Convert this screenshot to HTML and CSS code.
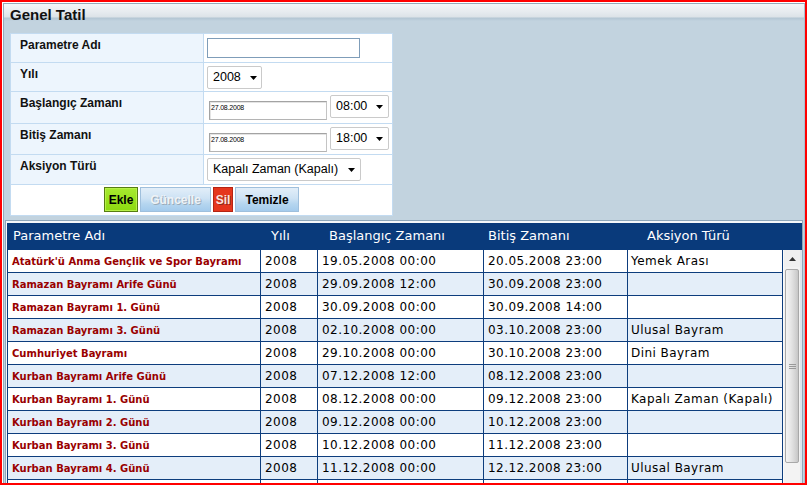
FILE: index.html
```html
<!DOCTYPE html>
<html lang="tr">
<head>
<meta charset="utf-8">
<title>Genel Tatil</title>
<link rel="stylesheet" href="styles.css">
</head>
<body>
<div class="frame">
  <div class="panel">
    <div class="titlebar">Genel Tatil</div>

    <div class="form">
      <div class="lbl r1">Parametre Adı</div>
      <div class="val r1"><span class="textbox"></span></div>

      <div class="lbl r2">Yılı</div>
      <div class="val r2"><span class="select s-year"><span>2008</span><svg class="caret" width="7" height="4" viewBox="0 0 7 4"><path d="M0 0h7L3.5 4z"/></svg></span></div>

      <div class="lbl r3">Başlangıç Zamanı</div>
      <div class="val r3 dt"><span class="date">27.08.2008</span><span class="select s-time"><span>08:00</span><svg class="caret" width="7" height="4" viewBox="0 0 7 4"><path d="M0 0h7L3.5 4z"/></svg></span></div>

      <div class="lbl r4">Bitiş Zamanı</div>
      <div class="val r4 dt"><span class="date">27.08.2008</span><span class="select s-time"><span>18:00</span><svg class="caret" width="7" height="4" viewBox="0 0 7 4"><path d="M0 0h7L3.5 4z"/></svg></span></div>

      <div class="lbl r5">Aksiyon Türü</div>
      <div class="val r5"><span class="select s-type"><span>Kapalı Zaman (Kapalı)</span><svg class="caret" width="7" height="4" viewBox="0 0 7 4"><path d="M0 0h7L3.5 4z"/></svg></span></div>

      <div class="buttons">
        <span class="btn ekle">Ekle</span>
        <span class="btn blue disabled">Güncelle</span>
        <span class="btn sil">Sil</span>
        <span class="btn blue">Temizle</span>
      </div>
    </div>

    <div class="grid">
      <div class="grid-head">
        <div class="h1">Parametre Adı</div>
        <div class="h2">Yılı</div>
        <div class="h3">Başlangıç Zamanı</div>
        <div class="h4">Bitiş Zamanı</div>
        <div class="h5">Aksiyon Türü</div>
      </div>
      <div class="grid-body">
        <div class="rows">
          <div class="row"><div class="name">Atatürk'ü Anma Gençlik ve Spor Bayramı</div><div class="cell">2008</div><div class="cell">19.05.2008 00:00</div><div class="cell">20.05.2008 23:00</div><div class="cell">Yemek Arası</div></div>
          <div class="row alt"><div class="name">Ramazan Bayramı Arife Günü</div><div class="cell">2008</div><div class="cell">29.09.2008 12:00</div><div class="cell">30.09.2008 23:00</div><div class="cell"></div></div>
          <div class="row"><div class="name">Ramazan Bayramı 1. Günü</div><div class="cell">2008</div><div class="cell">30.09.2008 00:00</div><div class="cell">30.09.2008 14:00</div><div class="cell"></div></div>
          <div class="row alt"><div class="name">Ramazan Bayramı 3. Günü</div><div class="cell">2008</div><div class="cell">02.10.2008 00:00</div><div class="cell">03.10.2008 23:00</div><div class="cell">Ulusal Bayram</div></div>
          <div class="row"><div class="name">Cumhuriyet Bayramı</div><div class="cell">2008</div><div class="cell">29.10.2008 00:00</div><div class="cell">30.10.2008 23:00</div><div class="cell">Dini Bayram</div></div>
          <div class="row alt"><div class="name">Kurban Bayramı Arife Günü</div><div class="cell">2008</div><div class="cell">07.12.2008 12:00</div><div class="cell">08.12.2008 23:00</div><div class="cell"></div></div>
          <div class="row"><div class="name">Kurban Bayramı 1. Günü</div><div class="cell">2008</div><div class="cell">08.12.2008 00:00</div><div class="cell">09.12.2008 23:00</div><div class="cell">Kapalı Zaman (Kapalı)</div></div>
          <div class="row alt"><div class="name">Kurban Bayramı 2. Günü</div><div class="cell">2008</div><div class="cell">09.12.2008 00:00</div><div class="cell">10.12.2008 23:00</div><div class="cell"></div></div>
          <div class="row"><div class="name">Kurban Bayramı 3. Günü</div><div class="cell">2008</div><div class="cell">10.12.2008 00:00</div><div class="cell">11.12.2008 23:00</div><div class="cell"></div></div>
          <div class="row alt"><div class="name">Kurban Bayramı 4. Günü</div><div class="cell">2008</div><div class="cell">11.12.2008 00:00</div><div class="cell">12.12.2008 23:00</div><div class="cell">Ulusal Bayram</div></div>
          <div class="row"><div class="name"></div><div class="cell"></div><div class="cell"></div><div class="cell"></div><div class="cell"></div></div>
        </div>
        <div class="scroll">
          <div class="sb-btn"><svg width="7" height="4" viewBox="0 0 7 4"><path d="M3.5 0L7 4H0z" fill="#333"/></svg></div>
          <div class="sb-thumb"><svg width="7" height="7" viewBox="0 0 7 7"><path d="M0 1.5h7M0 3.5h7M0 5.5h7" stroke="#9a9a9a" stroke-width="1"/></svg></div>
          <div class="sb-space"></div>
          <div class="sb-btn"><svg width="7" height="4" viewBox="0 0 7 4"><path d="M0 0h7L3.5 4z" fill="#333"/></svg></div>
        </div>
      </div>
    </div>
  </div>
</div>
</body>
</html>
```

FILE: styles.css
```css
html, body {
  margin: 0;
  padding: 0;
  background: #fff;
}

body {
  font-family: "Liberation Sans", Arial, sans-serif;
}

.frame {
  width: 807px;
  height: 485px;
  box-sizing: border-box;
  border: 2px solid #ff0000;
  padding: 1px 0 0 1px;
  background: #fff;
  overflow: hidden;
}

.panel {
  border: 1px solid #93a9ba;
  border-right-color: #a9bfcf;
  border-bottom: none;
  background: #c2d3df;
}

.titlebar {
  height: 17px;
  box-sizing: border-box;
  padding: 2px 0 0 6px;
  font: bold 15px/17px "Liberation Sans", Arial, sans-serif;
  color: #111;
  background: linear-gradient(to bottom, #f4f6f8 0px, #e6ebef 8px, #dce3e8 13px, #b3c6d3 14px, #bccedb 16px, #c2d3df 17px);
}

/* ---------- form ---------- */
.form {
  display: grid;
  grid-template-columns: 193px 188px;
  width: 383px;
  box-sizing: border-box;
  margin: 12px 0 0 6px;
  border: 1px solid #c3dbf1;
  background: #fff;
}

.lbl {
  box-sizing: border-box;
  background: #edf5fd;
  border-right: 1px solid #c3dbf1;
  border-bottom: 1px solid #c3dbf1;
  padding: 3px 0 0 9px;
  font: bold 12px/16px "Liberation Sans", Arial, sans-serif;
  color: #111;
}

.val {
  box-sizing: border-box;
  border-bottom: 1px solid #c3dbf1;
  padding: 3px 0 0 3px;
  display: flex;
  align-items: flex-start;
}

.r1 { height: 29px; }
.r2 { height: 29px; }
.r3 { height: 32px; }
.r4 { height: 31px; }
.r5 { height: 30px; }

.val.r1 { padding-top: 4px; }

.textbox {
  display: block;
  width: 153px;
  height: 20px;
  box-sizing: border-box;
  border: 1px solid #7f9db9;
  background: #fff;
}

.select {
  display: flex;
  align-items: center;
  justify-content: space-between;
  box-sizing: border-box;
  height: 23px;
  padding: 0 5px 0 5px;
  border: 1px solid #cacaca;
  border-radius: 2px;
  background: #fff;
  font: 12.5px/21px "Liberation Sans", Arial, sans-serif;
  color: #000;
}

.caret path { fill: #000; }

.s-year { width: 55px; padding-right: 4px; }
.s-time { width: 59px; margin-left: 3px; }
.s-type { width: 154px; }

.dt { padding-left: 5px; padding-top: 3px; }

.date {
  display: block;
  width: 118px;
  height: 19px;
  box-sizing: border-box;
  margin-top: 6px;
  border: 1px solid #a3a3a3;
  border-right-color: #c4c4c4;
  border-bottom-color: #b4b4b4;
  box-shadow: inset 1px 1px 0 #e4e4e4;
  background: #fff;
  padding: 2px 0 0 1px;
  font: 7px/8px "Liberation Sans", Arial, sans-serif;
  letter-spacing: -0.2px;
  color: #000;
}

.buttons {
  grid-column: 1 / 3;
  height: 30px;
  box-sizing: border-box;
  padding-top: 2px;
  display: flex;
  justify-content: center;
  align-items: flex-start;
  gap: 2px;
  background: #fff;
}

.btn {
  display: flex;
  align-items: center;
  justify-content: center;
  height: 25px;
  box-sizing: border-box;
  border: 1px solid;
  font: bold 12px/1 "Liberation Sans", Arial, sans-serif;
  color: #000;
}

.ekle {
  width: 34px;
  border-color: #567d12;
  background: linear-gradient(to bottom, #a7ea2f, #97e01b 60%, #8dd912);
  box-shadow: inset 0 0 0 1px #b7f04a;
}

.blue {
  border-color: #9fbfdc;
  background: linear-gradient(to bottom, #e2eef9, #cde2f4 45%, #b4d5ef 70%, #a4cbec);
}

.blue.disabled {
  width: 71px;
  color: #eef2f6;
  text-shadow: 1px 1px 0 #9aabb9;
}

.btn.blue:last-child { width: 64px; }

.sil {
  width: 20px;
  border-color: #b42414;
  background: #e5361d;
  color: #fbe3df;
  text-shadow: 1px 1px 0 #8e2a1c;
}

/* ---------- grid ---------- */
.grid {
  margin: 4px 1px 0 1px;
  border: 1px solid #8ea7bb;
  padding: 2px 0 0 1px;
  background: #f4f7fa;
}

.grid-head {
  display: grid;
  grid-template-columns: 254px 57px 166px 144px 1fr;
  height: 27px;
  background: #093a7b;
  color: #fff;
  font: 13px/26px "DejaVu Sans", Verdana, sans-serif;
  white-space: nowrap;
}

.h1 { padding-left: 6px; }
.h2 { padding-left: 10px; }
.h3 { padding-left: 11px; }
.h4 { padding-left: 4px; }
.h5 { padding-left: 19px; }

.grid-body {
  display: flex;
  align-items: flex-start;
  background: #dde6ee;
}

.rows {
  width: 776px;
  box-sizing: border-box;
  border-left: 1px solid #0d3d7d;
  background: #fff;
}

.row {
  display: grid;
  grid-template-columns: 253px 57px 166px 144px 155px;
  height: 23px;
  background: #fff;
}

.row.alt { background: #e4eef9; }

.row > div {
  box-sizing: border-box;
  border-right: 1px solid #0d3d7d;
  border-bottom: 1px solid #0d3d7d;
  padding-left: 4px;
  white-space: nowrap;
  overflow: hidden;
}

.name {
  color: #990000;
  font: bold 10px/23px "DejaVu Sans", Verdana, sans-serif;
}

.cell {
  color: #000;
  font: 12px/23px "DejaVu Sans", Verdana, sans-serif;
  letter-spacing: 0.45px;
}

.row > .cell:last-child { padding-left: 3px; }

.scroll {
  width: 17px;
  height: 247px;
  display: flex;
  flex-direction: column;
  align-items: center;
  background: #f3f3f3;
  border-left: 1px solid #fafafa;
  box-sizing: border-box;
}

.sb-btn {
  width: 16px;
  height: 17px;
  display: flex;
  align-items: center;
  justify-content: center;
  background: #f0f0f0;
}

.sb-thumb {
  width: 14px;
  height: 194px;
  margin-top: 2px;
  box-sizing: border-box;
  border: 1px solid #a8a8a8;
  border-radius: 2px;
  background: linear-gradient(to right, #f4f4f4, #e6e6e6 40%, #d2d2d2 80%, #c6c6c6);
  display: flex;
  align-items: center;
  justify-content: center;
}

.sb-space {
  height: 17px;
}
```
